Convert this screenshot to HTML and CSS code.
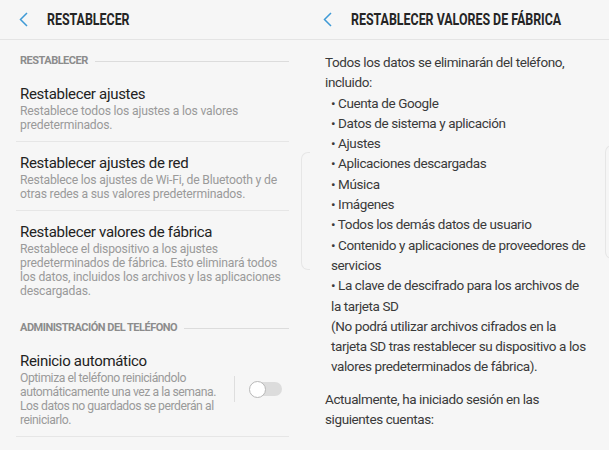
FILE: index.html
```html
<!DOCTYPE html>
<html lang="es">
<head>
    <meta charset="UTF-8">
    <meta name="viewport" content="width=device-width, initial-scale=1.0">
    <title>Restablecer</title>

    <link rel="stylesheet" href="styles.css">
</head>
<body>
    <div class="screens">

        <!-- pantalla: restablecer -->
        <section class="screen screenLeft">
            <header class="toolbar">
                <svg class="back" width="9" height="15" viewBox="0 0 9 15">
                    <path d="M8 1 L1.5 7.5 L8 14" />
                </svg>
                <h1 class="toolbarTitle">RESTABLECER</h1>
            </header>

            <div class="group">
                <h2 class="groupTitle"><span>RESTABLECER</span></h2>

                <div class="item">
                    <div class="itemTitle">Restablecer ajustes</div>
                    <div class="itemText">Restablece todos los ajustes a los valores<br>predeterminados.</div>
                </div>

                <div class="item">
                    <div class="itemTitle">Restablecer ajustes de red</div>
                    <div class="itemText">Restablece los ajustes de Wi-Fi, de Bluetooth y de<br>otras redes a sus valores predeterminados.</div>
                </div>

                <div class="item">
                    <div class="itemTitle">Restablecer valores de fábrica</div>
                    <div class="itemText">Restablece el dispositivo a los ajustes<br>predeterminados de fábrica. Esto eliminará todos<br>los datos, incluidos los archivos y las aplicaciones<br>descargadas.</div>
                </div>
            </div>

            <div class="group">
                <h2 class="groupTitle"><span>ADMINISTRACIÓN DEL TELÉFONO</span></h2>

                <div class="item itemSwitch">
                    <div class="itemBody">
                        <div class="itemTitle">Reinicio automático</div>
                        <div class="itemText">Optimiza el teléfono reiniciándolo<br>automáticamente una vez a la semana.<br>Los datos no guardados se perderán al<br>reiniciarlo.</div>
                    </div>
                    <div class="switchWrap">
                        <div class="switch"><span class="knob"></span></div>
                    </div>
                </div>
            </div>
        </section>

        <!-- pantalla: valores de fabrica -->
        <section class="screen screenRight">
            <header class="toolbar">
                <svg class="back" width="9" height="15" viewBox="0 0 9 15">
                    <path d="M8 1 L1.5 7.5 L8 14" />
                </svg>
                <h1 class="toolbarTitle">RESTABLECER VALORES DE FÁBRICA</h1>
            </header>

            <div class="content">
                <p>Todos los datos se eliminarán del teléfono,<br>incluido:</p>
                <p class="bullet">• Cuenta de Google</p>
                <p class="bullet">• Datos de sistema y aplicación</p>
                <p class="bullet">• Ajustes</p>
                <p class="bullet">• Aplicaciones descargadas</p>
                <p class="bullet">• Música</p>
                <p class="bullet">• Imágenes</p>
                <p class="bullet">• Todos los demás datos de usuario</p>
                <p class="bullet">• Contenido y aplicaciones de proveedores de<br>servicios</p>
                <p class="bullet">• La clave de descifrado para los archivos de<br>la tarjeta SD</p>
                <p class="bullet">(No podrá utilizar archivos cifrados en la<br>tarjeta SD tras restablecer su dispositivo a los<br>valores predeterminados de fábrica).</p>

                <p class="spaced">Actualmente, ha iniciado sesión en las<br>siguientes cuentas:</p>
            </div>
        </section>

        <!-- bordes curvos de la pantalla -->
        <div class="edge edgeLeft"></div>
        <div class="edge edgeRight"></div>
    </div>
</body>
</html>
```

FILE: styles.css
```css
body {
    margin: 0;
    font-family: Roboto, "Noto Sans", Arial, sans-serif;
    background-color: #f6f6f6;
    color: #222;
}

.screens {
    position: relative;
    display: flex;
    width: 609px;
    height: 450px;
    overflow: hidden;
}

.screen {
    background-color: #f6f6f6;
}

.screenLeft {
    width: 300px;
    flex-shrink: 0;
}

.screenRight {
    flex: 1;
    min-width: 0;
}

/* barra superior */

.toolbar {
    display: flex;
    align-items: center;
    height: 39px;
    padding-left: 19px;
    border-bottom: 1px solid #e4e4e4;
    overflow: hidden;
}

.screenRight .toolbar {
    padding-left: 23px;
}

.back {
    flex-shrink: 0;
    margin-right: 19px;
}

.back path {
    fill: none;
    stroke: #3f9ad6;
    stroke-width: 1.5;
}

.toolbarTitle {
    margin: 0;
    font-size: 16px;
    font-weight: 700;
    color: #252525;
    white-space: nowrap;
    transform: scaleX(0.775);
    transform-origin: left center;
}

/* lista de ajustes */

.groupTitle {
    display: flex;
    align-items: center;
    margin: 0;
    padding: 14px 11px 5px 20px;
    font-size: 11px;
    line-height: 14px;
    font-weight: 700;
    color: #8c8c8c;
    letter-spacing: -0.5px;
}

.groupTitle::after {
    content: "";
    flex: 1;
    height: 1px;
    margin-left: 7px;
    background-color: #dcdcdc;
}

.item {
    margin: 0 11px 0 16px;
    padding: 11px 0 9px 4px;
    border-bottom: 1px solid #e6e6e6;
}

.group .item:last-child {
    border-bottom: none;
}

.group:last-child .item:last-child {
    border-bottom: 1px solid #e6e6e6;
}

.itemTitle {
    font-size: 15px;
    line-height: 20px;
    letter-spacing: -0.3px;
    color: #222;
}

.itemText {
    font-size: 12.2px;
    line-height: 14px;
    letter-spacing: -0.2px;
    color: #9a9a9a;
    white-space: nowrap;
}

.itemSwitch {
    display: flex;
    align-items: center;
}

.itemBody {
    flex: 1;
    min-width: 0;
}

.itemSwitch .itemText {
    letter-spacing: -0.45px;
}

.switchWrap {
    display: flex;
    align-items: center;
    height: 26px;
    margin-left: 10px;
    margin-right: 7px;
    padding-left: 20px;
    border-left: 1px solid #dedede;
}

.switch {
    display: flex;
    align-items: center;
    width: 27px;
    height: 14px;
    border-radius: 7px;
    background-color: #dcdcdc;
}

.knob {
    width: 17px;
    height: 17px;
    margin-left: -6px;
    box-sizing: border-box;
    border-radius: 50%;
    background-color: #fff;
    border: 1px solid #b8b8b8;
}

/* texto de la derecha */

.content {
    padding: 12px 10px 0 25px;
}

.content p {
    margin: 0;
    font-size: 13.5px;
    line-height: 20.3px;
    letter-spacing: -0.4px;
    color: #3a3a3a;
    white-space: nowrap;
}

.content .bullet {
    padding-left: 6px;
}

.content .spaced {
    margin-top: 12px;
}

/* bordes */

.edge {
    position: absolute;
    width: 8px;
    border: 1px solid #e6e6e6;
    border-right: none;
    border-radius: 7px 0 0 7px;
}

.edgeLeft {
    left: 301px;
    top: 152px;
    height: 116px;
}

.edgeRight {
    left: 605px;
    top: 145px;
    height: 112px;
}
```
